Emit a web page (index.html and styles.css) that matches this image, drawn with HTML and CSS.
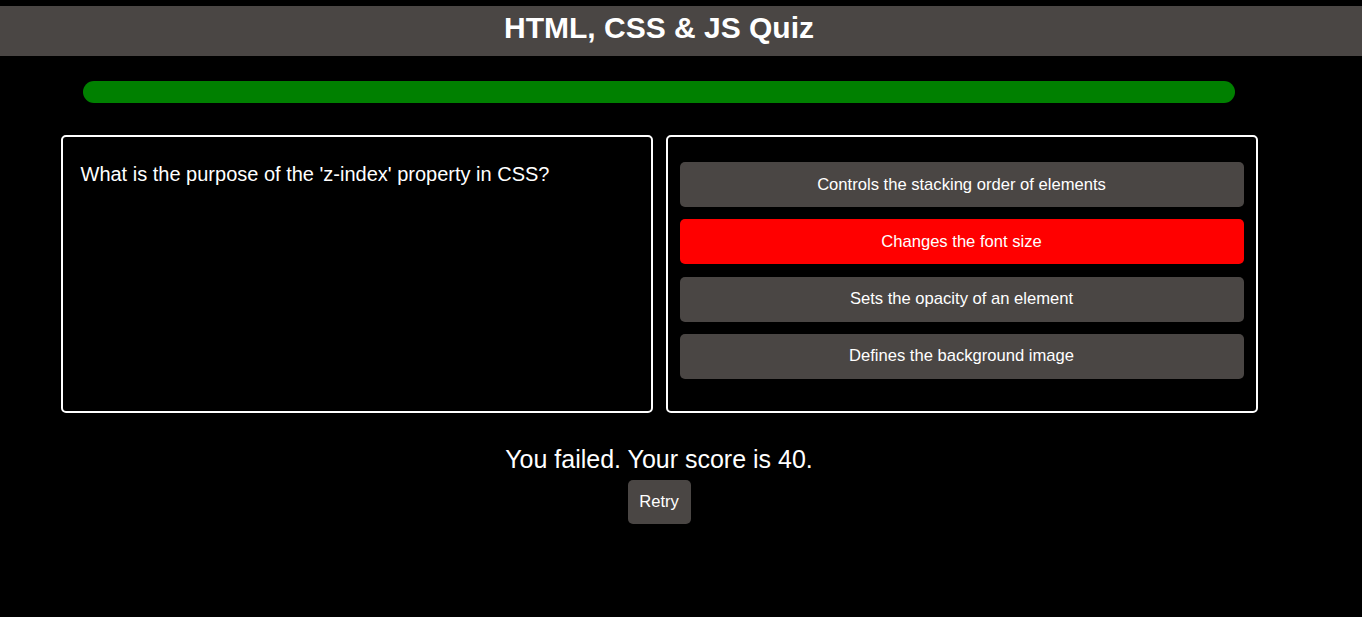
FILE: index.html
```html
<!DOCTYPE html>
<html>
<head>
<meta charset="utf-8">
<title>HTML, CSS &amp; JS Quiz</title>
<link rel="stylesheet" href="styles.css">
</head>
<body>
<header class="topbar">
  <div class="page">
    <h1 class="title">HTML, CSS &amp; JS Quiz</h1>
  </div>
</header>
<main class="page">
  <div class="progress"></div>
  <div class="cards">
    <section class="card question-card">
      <p class="question">What is the purpose of the 'z-index' property in CSS?</p>
    </section>
    <section class="card answers-card">
      <button class="answer">Controls the stacking order of elements</button>
      <button class="answer wrong">Changes the font size</button>
      <button class="answer">Sets the opacity of an element</button>
      <button class="answer">Defines the background image</button>
    </section>
  </div>
  <div class="result">
    <p class="score">You failed. Your score is 40.</p>
    <button class="retry">Retry</button>
  </div>
</main>
</body>
</html>
```
FILE: styles.css
```css
html, body {
  margin: 0;
  padding: 0;
  background: #000;
  color: #fff;
  font-family: "Liberation Sans", Arial, sans-serif;
}
body {
  padding-top: 6px;
}
.page {
  width: 1318px;
}
.topbar {
  background: #4a4644;
  height: 50px;
}
.title {
  margin: 0;
  text-align: center;
  font-size: 30px;
  font-weight: bold;
  line-height: 44px;
}
.progress {
  width: 1152px;
  height: 22px;
  margin: 25px auto 0;
  background: #008000;
  border-radius: 11px;
}
.cards {
  display: grid;
  grid-template-columns: 1fr 1fr;
  gap: 13px;
  width: 1197px;
  margin: 32px auto 0;
}
.card {
  box-sizing: border-box;
  min-width: 0;
  border: 2px solid #fff;
  border-radius: 5px;
}
.question-card {
  padding: 26px 18px;
}
.question {
  margin: 0;
  font-size: 20px;
}
.answers-card {
  display: flex;
  flex-direction: column;
  gap: 12.33px;
  padding: 25px 12px 32px;
}
.answer {
  height: 45px;
  border: none;
  border-radius: 5px;
  background: #4a4644;
  color: #fff;
  font-family: "Liberation Sans", Arial, sans-serif;
  font-size: 16.6px;
}
.answer.wrong {
  background: #ff0000;
}
.result {
  display: flex;
  flex-direction: column;
  align-items: center;
  margin-top: 32px;
}
.score {
  margin: 0;
  font-size: 25px;
  line-height: 29px;
}
.retry {
  margin-top: 6px;
  width: 63px;
  height: 44px;
  border: none;
  border-radius: 5px;
  background: #4a4644;
  color: #fff;
  font-family: "Liberation Sans", Arial, sans-serif;
  font-size: 16.6px;
}
```
